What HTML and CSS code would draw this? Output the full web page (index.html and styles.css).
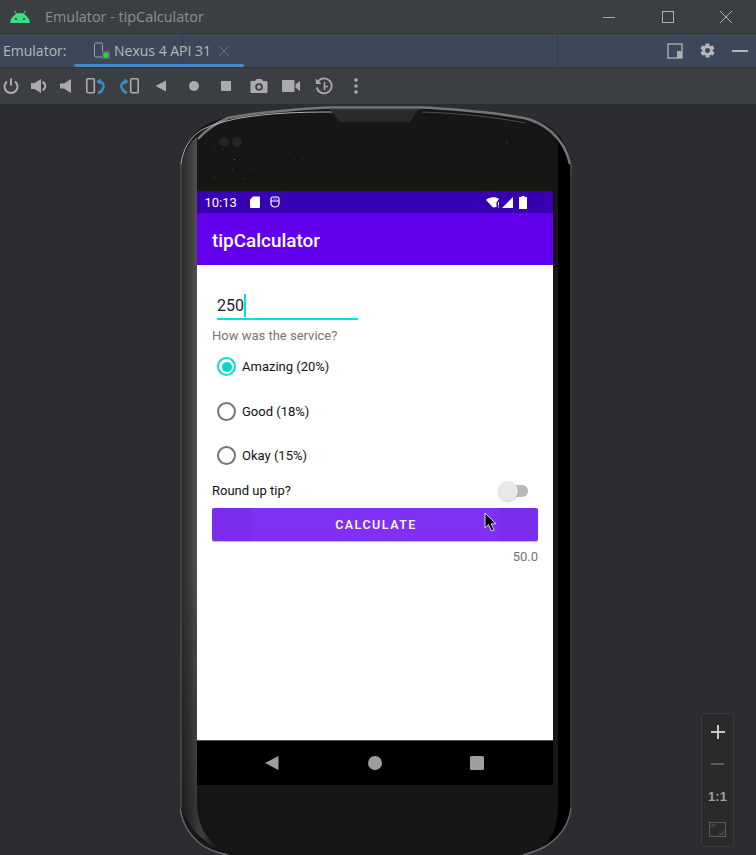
FILE: index.html
```html
<!DOCTYPE html>
<html lang="en">
<head>
<meta charset="utf-8">
<title>Emulator - tipCalculator</title>
<link rel="stylesheet" href="styles.css">
</head>
<body>
<div class="window">
  <header class="titlebar">
    <svg class="android" width="22" height="14" viewBox="0 0 22 14"><path d="M1 13C1.5 8.5 4 5.5 7 4L5.2 1 5.9.6 7.8 3.6C9.8 2.8 12.2 2.8 14.2 3.6L16.1.6 16.8 1 15 4C18 5.5 20.5 8.5 21 13Z" fill="#3ddc84"/><circle cx="7" cy="9" r="1" fill="#3c3f41"/><circle cx="15" cy="9" r="1" fill="#3c3f41"/></svg>
    <span class="title">Emulator - tipCalculator</span>
    <div class="winctl">
      <svg width="14" height="14" viewBox="0 0 14 14"><path d="M1 7.5H13" stroke="#a8a8a8"/></svg>
      <svg width="14" height="14" viewBox="0 0 14 14"><rect x="1.5" y="1.5" width="11" height="11" fill="none" stroke="#b0b0b0"/></svg>
      <svg width="14" height="14" viewBox="0 0 14 14"><path d="M1 1L13 13M13 1L1 13" stroke="#b0b0b0"/></svg>
    </div>
  </header>
  <nav class="tabbar">
    <span class="tool-label">Emulator:</span>
    <div class="tab">
      <svg width="18" height="18" viewBox="0 0 18 18"><rect x="1.5" y="1" width="8" height="14" rx="1.5" fill="none" stroke="#9aa0a6"/><rect x="9" y="9" width="8" height="8" fill="#6b5a9c"/><circle cx="13" cy="13" r="2.6" fill="#19e619"/></svg>
      <span class="tab-name">Nexus 4 API 31</span>
      <svg class="tab-close" width="10" height="10" viewBox="0 0 10 10"><path d="M.5.5L9.5 9.5M9.5.5L.5 9.5" stroke="#6f7780"/></svg>
    </div>
    <div class="tab-actions">
      <svg width="16" height="16" viewBox="0 0 16 16"><rect x="1" y="1" width="14" height="14" fill="none" stroke="#a9adb1" stroke-width="1.4"/><rect x="10" y="8" width="5" height="7" fill="#a9adb1"/></svg>
      <svg width="17" height="17" viewBox="0 0 24 24"><path fill="#b4b6b8" fill-rule="evenodd" d="M19.4 13c.1-.3.1-.7.1-1s0-.7-.1-1l2.1-1.6c.2-.2.2-.4.1-.6l-2-3.5c-.1-.2-.4-.3-.6-.2l-2.5 1c-.5-.4-1.1-.7-1.7-1l-.4-2.6c0-.3-.2-.4-.5-.4h-4c-.2 0-.4.2-.5.4l-.4 2.6c-.6.3-1.2.6-1.7 1l-2.5-1c-.2-.1-.5 0-.6.2l-2 3.5c-.1.2-.1.5.1.6L4.6 11c-.1.3-.1.7-.1 1s0 .7.1 1l-2.1 1.6c-.2.2-.2.4-.1.6l2 3.5c.1.2.4.3.6.2l2.5-1c.5.4 1.1.7 1.7 1l.4 2.6c0 .3.3.4.5.4h4c.2 0 .5-.2.5-.4l.4-2.6c.6-.3 1.2-.6 1.7-1l2.5 1c.2.1.5 0 .6-.2l2-3.5c.1-.2.1-.5-.1-.6ZM12 15.5a3.5 3.5 0 1 1 0-7 3.5 3.5 0 0 1 0 7Z"/></svg>
      <svg width="16" height="4" viewBox="0 0 16 4"><rect y="1" width="16" height="2" fill="#b4b6b8"/></svg>
    </div>
  </nav>
  <div class="toolbar">
    <span class="tool"><svg width="18" height="18" viewBox="0 0 18 18"><path d="M5 4.5A6.5 6.5 0 1 0 13 4.5M9 1.5V8.5" fill="none" stroke="#a9abad" stroke-width="2"/></svg></span>
    <span class="tool"><svg width="18" height="18" viewBox="0 0 18 18"><path d="M1 6H4.5L11 2V16L4.500 12H1Z" fill="#a9abad"/><path d="M12.500 5A4.300 4.300 0 0 1 12.500 13" fill="none" stroke="#a9abad" stroke-width="2"/></svg></span>
    <span class="tool"><svg width="14" height="16" viewBox="0 0 14 16"><path d="M1 5.500H5L12 1V15L5 10.500H1Z" fill="#a9abad"/></svg></span>
    <span class="tool"><svg width="20" height="16" viewBox="0 0 20 16"><rect x=".8" y=".8" width="7.500" height="14" rx="1" fill="none" stroke="#a9abad" stroke-width="1.600"/><path d="M13 3.500C17 3.500 18.500 7.500 17 10.500 16 13 14 14.500 12 15" fill="none" stroke="#3592c4" stroke-width="2.400"/><path d="M10.500 3.500L14.500 0V7Z" fill="#3592c4"/></svg></span>
    <span class="tool"><svg width="20" height="16" viewBox="0 0 20 16"><rect x="11.700" y=".8" width="7.500" height="14" rx="1" fill="none" stroke="#a9abad" stroke-width="1.600"/><path d="M7 3.500C3 3.500 1.500 7.500 3 10.500 4 13 6 14.500 8 15" fill="none" stroke="#3592c4" stroke-width="2.400"/><path d="M9.500 3.500L5.500 0V7Z" fill="#3592c4"/></svg></span>
    <span class="tool"><svg width="12" height="12" viewBox="0 0 12 12"><path d="M.5 6L11 .5V11.500Z" fill="#a9abad"/></svg></span>
    <span class="tool"><svg width="12" height="12" viewBox="0 0 12 12"><circle cx="6" cy="6" r="5" fill="#a9abad"/></svg></span>
    <span class="tool"><svg width="12" height="12" viewBox="0 0 12 12"><rect x="1" y="1" width="10" height="10" rx=".6" fill="#a9abad"/></svg></span>
    <span class="tool"><svg width="18" height="16" viewBox="0 0 18 16"><path fill="#a9abad" fill-rule="evenodd" d="M1.500 3H5L6.500 1H11.500L13 3H16.500C17 3 17.500 3.500 17.500 4V14C17.500 14.500 17 15 16.500 15H1.500C1 15 .5 14.500 .5 14V4C.5 3.500 1 3 1.500 3ZM9 5.200A3.800 3.800 0 1 0 9 12.800 3.800 3.800 0 0 0 9 5.200ZM9 7A2 2 0 1 1 9 11 2 2 0 0 1 9 7Z"/></svg></span>
    <span class="tool"><svg width="18" height="14" viewBox="0 0 18 14"><rect y="1" width="12.500" height="12" rx="1" fill="#a9abad"/><path d="M13.500 5.500L18 2V12L13.500 8.500Z" fill="#a9abad"/></svg></span>
    <span class="tool"><svg width="18" height="18" viewBox="0 0 18 18"><path d="M3 4.500A7.500 7.500 0 1 1 1.800 10.500" fill="none" stroke="#a9abad" stroke-width="1.800"/><path d="M.5 1.500L1 7H6.500Z" fill="#a9abad"/><path d="M9.500 5V9.500H13M9.500 9.500V13" fill="none" stroke="#a9abad" stroke-width="1.500"/></svg></span>
    <span class="tool"><svg width="4" height="16" viewBox="0 0 4 16"><circle cx="2" cy="2" r="1.800" fill="#a9abad"/><circle cx="2" cy="8" r="1.800" fill="#a9abad"/><circle cx="2" cy="14" r="1.800" fill="#a9abad"/></svg></span>
  </div>
  <main class="canvas">
    <div class="phone">
      <svg class="bezel" width="392" height="751" viewBox="0 0 392 751">
        <defs>
          <linearGradient id="side" x1="0" x2="1" y1="0" y2="0">
            <stop offset="0" stop-color="#2c2c2c"/>
            <stop offset=".2" stop-color="#3a3a3a"/>
            <stop offset=".55" stop-color="#5e5e5e"/>
            <stop offset=".8" stop-color="#3a3a3a"/>
            <stop offset="1" stop-color="#1c1c1c"/>
          </linearGradient>
          <linearGradient id="sideLow" x1="0" x2="0" y1="0" y2="1">
            <stop offset="0" stop-color="#000" stop-opacity="0"/>
            <stop offset=".6" stop-color="#000" stop-opacity="0"/>
            <stop offset="1" stop-color="#000" stop-opacity=".35"/>
          </linearGradient>
          <linearGradient id="fadeRight" x1="0" x2="1" y1="0" y2="0">
            <stop offset="0" stop-color="#fff" stop-opacity="0"/>
            <stop offset="1" stop-color="#fff"/>
          </linearGradient>
          <mask id="fadeMask" maskUnits="userSpaceOnUse" x="260" y="0" width="132" height="751"><rect x="260" width="132" height="751" fill="url(#fadeRight)"/></mask>
          <filter id="darkNoise" x="0" y="0" width="100%" height="100%">
            <feTurbulence type="fractalNoise" baseFrequency=".85" numOctaves="1" seed="4"/>
            <feColorMatrix values="0 0 0 0 0  0 0 0 0 0  0 0 0 0 0  9 0 0 0 -6.400"/>
          </filter>
          <filter id="lightNoise" x="0" y="0" width="100%" height="100%">
            <feTurbulence type="fractalNoise" baseFrequency=".9" numOctaves="1" seed="11"/>
            <feColorMatrix values="0 0 0 0 .15  0 0 0 0 .15  0 0 0 0 .15  9 0 0 0 -6.700"/>
          </filter>
          <clipPath id="body"><path d="M0 71C1 36 20 19 45 14 80 8 120 5 150 4H242C272 5 312 8 347 14 372 19 391 36 392 71V704C389 720 380 733 366 742 358 747 350 749 343 751H48C38 749 26 745 18 738 9 730 2 718 0 704Z"/></clipPath>
        </defs>
        <g clip-path="url(#body)">
          <rect width="392" height="751" fill="#161616"/>
          <rect x="17" y="34" width="110" height="53" filter="url(#lightNoise)"/>
          <g mask="url(#fadeMask)">
            <rect x="260" y="14" width="120" height="73" filter="url(#darkNoise)"/>
            <rect x="260" y="681" width="120" height="70" filter="url(#darkNoise)"/>
          </g>
          <path d="M378 30C386 42 390 58 391 71V704C388 722 378 735 360 746 372 735 378 722 378 700Z" fill="#000"/>
          <path d="M2 60C4 47 10 38 17 33V700C17 720 25 732 38 745 20 736 8 722 2 704Z" fill="url(#side)"/>
          <path d="M2 60C4 47 10 38 17 33V700C17 720 25 732 38 745 20 736 8 722 2 704Z" fill="url(#sideLow)"/>
        </g>
        <path d="M18 35C26 26 36 19 48 14 80 8 120 5 150 3.500H242C272 5 312 8 344 14 362 18 384 32 390 60" fill="none" stroke="#757678" stroke-width="2.500"/>
        <path d="M1 60C3 45 10 34 20 27 32 20 46 17 60 14 90 9 120 8 150 8H170" fill="none" stroke="#c4c4c4" stroke-width=".9"/>
        <path d="M242 8C272 9 310 12 345 19" fill="none" stroke="#4e4e4e"/>
        <path d="M1 60V704" stroke="#77797b" stroke-width=".9"/>
        <path d="M391 60V704" stroke="#555759" stroke-width="1.200"/>
        <path d="M0 704C2 718 9 730 18 738 26 745 38 749 48 751" fill="none" stroke="#6a6a6a" stroke-width="1.500"/>
        <path d="M391 704C389 720 380 733 366 742 358 747 350 749 343 751" fill="none" stroke="#6a6a6a" stroke-width="1.500"/>
        <path d="M150 6H238L230 18H160Z" fill="#2a2a2a"/>
        <path d="M150 5H240" stroke="#555" stroke-width="1"/>
        <circle cx="44" cy="38" r="5" fill="#242424"/><circle cx="57" cy="38" r="5" fill="#262626"/>
        <circle cx="327" cy="38" r="1.500" fill="#24242e"/>
      </svg>
      <div class="screen">
        <div class="statusbar">
          <span class="clock">10:13</span>
          <svg class="st-ic" width="10" height="12" viewBox="0 0 10 12"><path d="M3 .5H9C9.500 .5 10 1 10 1.500V11C10 11.500 9.500 12 9 12H1C.5 12 0 11.500 0 11V3.500Z" fill="#fff"/></svg>
          <svg class="st-ic st-usb" width="10" height="12" viewBox="0 0 10 12"><path d="M1 2.500C1 1.500 2 1 3 1H7C8 1 9 1.500 9 2.500V7.500C9 9.500 7 11 5 11S1 9.500 1 7.500ZM1 5H9" fill="none" stroke="#fff" stroke-width="1.200"/><path d="M3.500 3H4.500M5.500 3H6.500" stroke="#fff"/></svg>
          <div class="st-right">
            <svg width="14" height="11" viewBox="0 0 14 11"><path d="M0 3C3-.5 10-.5 13 2L10.500 5.500V10L7 10.500Z" fill="#fff"/><path d="M12.500 5V8.500M12.500 9.500V10.500" stroke="#fff"/></svg>
            <svg class="st-signal" width="11" height="11" viewBox="0 0 11 11"><path d="M11 0V11H0Z" fill="#fff"/></svg>
            <svg width="8" height="13" viewBox="0 0 8 13"><path d="M2.500 0H5.500V1H8V13H0V1H2.500Z" fill="#fff"/></svg>
          </div>
        </div>
        <div class="appbar">tipCalculator</div>
        <div class="content">
          <div class="field"><span class="field-text">250</span><span class="caret"></span></div>
          <p class="hint">How was the service?</p>
          <div class="radio-group">
            <label class="radio radio-on"><span class="dot"></span>Amazing (20%)</label>
            <label class="radio"><span class="dot"></span>Good (18%)</label>
            <label class="radio"><span class="dot"></span>Okay (15%)</label>
          </div>
          <div class="round-row">
            <span>Round up tip?</span>
            <span class="switch"><span class="thumb"></span></span>
          </div>
          <div class="button"><span class="ripple"></span><span class="button-label">CALCULATE</span>
            <svg class="pointer" width="14" height="20" viewBox="0 0 14 20"><path d="M1 1V16L4.500 12.500 7.500 19 10 18 7.200 11.800H12Z" fill="#000" stroke="#fff" stroke-width=".8"/></svg>
          </div>
          <div class="result">50.0</div>
        </div>
        <div class="navbar">
          <svg width="14" height="16" viewBox="0 0 14 16"><path d="M0 8L13.500 1V15C13.500 15 0 8 0 8Z" fill="#9e9e9e"/></svg>
          <svg width="14" height="14" viewBox="0 0 14 14"><circle cx="7" cy="7" r="7" fill="#9e9e9e"/></svg>
          <svg width="14" height="14" viewBox="0 0 14 14"><rect width="14" height="14" rx="1.500" fill="#9e9e9e"/></svg>
        </div>
      </div>
    </div>
    <div class="zoombox">
      <svg width="14" height="14" viewBox="0 0 14 14"><path d="M7 0V14M0 7H14" stroke="#c4c4c4" stroke-width="2"/></svg>
      <svg width="13" height="14" viewBox="0 0 13 14"><path d="M0 7H13" stroke="#5c5c5c" stroke-width="2"/></svg>
      <span class="oneone">1:1</span>
      <svg width="17" height="15" viewBox="0 0 17 15"><rect x=".5" y=".5" width="16" height="14" fill="none" stroke="#5a5a5a" stroke-width="1.200"/><path d="M3 6V3H7M14 9V12H10" fill="none" stroke="#5a5a5a"/></svg>
    </div>
  </main>
</div>
</body>
</html>
```
FILE: styles.css
```css
* { box-sizing: border-box; }
html, body { margin: 0; padding: 0; background: #2b2d30; }
.window { width: 756px; height: 855px; overflow: hidden; display: flex; flex-direction: column; font-family: "Open Sans", "Noto Sans", sans-serif; }
.titlebar { height: 34px; flex: none; background: #3c3f41; display: flex; align-items: center; padding-left: 9px; border-bottom: 1px solid #323437; }
.android { flex: none; }
.title { margin-left: 14px; font-size: 14.400px; color: #8c8f91; }
.winctl { margin-left: auto; display: flex; gap: 44.500px; padding-right: 23px; }
.tabbar { height: 34px; flex: none; background: #3c4857; display: flex; align-items: center; border-bottom: 1px solid #32363b; padding-left: 3px; position: relative; }
.tabbar::before, .tabbar::after { content: ""; position: absolute; top: 0; bottom: 0; width: 1px; background: #343d49; }
.tabbar::before { left: 182px; }
.tabbar::after { left: 557px; }
.tool-label { font-size: 14px; color: #b3b8bd; width: 87px; flex: none; }
.tab { height: 33px; display: flex; align-items: center; gap: 3px; position: relative; padding-left: 3px; width: 170px; flex: none; z-index: 1; }
.tab::after { content: ""; position: absolute; left: -16px; width: 170px; bottom: 0; height: 3px; border-radius: 2px; background: #4a88c7; }
.tab-name { font-size: 14px; color: #b3b8bd; white-space: nowrap; }
.tab-close { margin-left: 5px; }
.tab-actions { margin-left: auto; display: flex; align-items: center; gap: 16px; padding-right: 8px; }
.toolbar { height: 36px; flex: none; background: #3c3f41; display: grid; grid-template-columns: 28px 28px 26px 34px 32px 32px 33px 32px 33px 32px 33px 32px; margin-left: -3px; align-items: center; justify-items: center; width: 759px; justify-content: start; }
.tool { display: flex; align-items: center; justify-content: center; }
.canvas { flex: 1; min-height: 0; background: #2b2d30; position: relative; overflow: hidden; padding: 0 0 0 180px; }
.phone { width: 392px; height: 800px; position: relative; padding: 87px 19px 0 17px; }
.bezel { position: absolute; left: 0; top: 0; }
.screen { position: relative; width: 356px; display: flex; flex-direction: column; font-family: Roboto, sans-serif; }
.statusbar { height: 22px; background: #3700b3; color: #fff; display: flex; align-items: center; padding: 0 0 0 8px; font-size: 13px; }
.clock { width: 45px; margin-left: -.5px; }
.st-ic { margin-right: 10px; }
.st-usb { margin-right: 0; }
.st-right { margin-left: auto; display: flex; align-items: center; gap: 2px; padding-right: 26px; }
.st-signal { margin-right: 4px; }
.appbar { height: 52px; background: #6200ee; color: #fff; font-size: 18.900px; font-weight: 500; display: flex; align-items: center; padding: 2px 0 0 15px; }
.content { height: 476px; background: #fff; padding: 0 15px; display: flex; flex-direction: column; border-bottom: 1px solid #555; }
.field { margin: 27px 0 0 5px; width: 141px; height: 27.500px; border-bottom: 2px solid #03e2d2; display: flex; align-items: center; font-size: 16px; color: #222; padding-top: 2px; }
.caret { width: 2px; height: 23px; background: #03e2d2; }
.hint { margin: 7px 0 0; font-size: 13px; line-height: 18px; color: #757575; }
.radio-group { display: flex; flex-direction: column; }
.radio { height: 44.500px; display: flex; align-items: center; gap: 6px; padding-left: 5px; font-size: 13px; color: #111; }
.dot { width: 19px; height: 19px; border: 2px solid #757575; border-radius: 50%; flex: none; position: relative; }
.radio-on .dot { border-color: #03e2d2; }
.radio-on .dot::after { content: ""; position: absolute; inset: 2.500px; border-radius: 50%; background: #03dac5; }
.round-row { display: flex; justify-content: space-between; align-items: center; font-size: 13px; color: #111; height: 20px; margin-top: 2.500px; }
.switch { width: 23px; height: 12px; border-radius: 6px; background: #b9b9b9; margin-right: 10px; position: relative; }
.thumb { position: absolute; left: -7px; top: -4px; width: 20px; height: 20px; border-radius: 50%; background: #e8e8e8; box-shadow: 0 1px 2px rgba(0,0,0,.2); }
.button { margin-top: 7.500px; height: 33px; background: #7b2ced; border-radius: 2px; box-shadow: 0 1px 1px rgba(0,0,0,.25); display: flex; align-items: center; justify-content: center; position: relative; }
.ripple { position: absolute; left: 39px; right: 39px; top: 0; bottom: 0; background: #7f30f2; }
.button-label { position: relative; color: #fff; font-size: 12.500px; font-weight: 500; letter-spacing: 1.500px; padding-left: 2px; }
.pointer { position: absolute; left: 272px; top: 4px; }
.result { margin-top: 8px; text-align: right; font-size: 13px; line-height: 16px; color: #757575; }
.navbar { height: 44px; background: #000; display: flex; align-items: center; justify-content: space-between; padding: 0 69px 0 68px; }
.zoombox { position: absolute; right: 22px; bottom: 8px; width: 33px; height: 134px; background: #2a2a2a; border: 1px solid #3a3b3c; border-radius: 4px; display: flex; flex-direction: column; align-items: center; padding: 11px 0 9px; justify-content: space-between; }
.oneone { font-size: 13px; font-weight: 700; color: #a0a0a0; font-family: "Liberation Sans", sans-serif; }
```
